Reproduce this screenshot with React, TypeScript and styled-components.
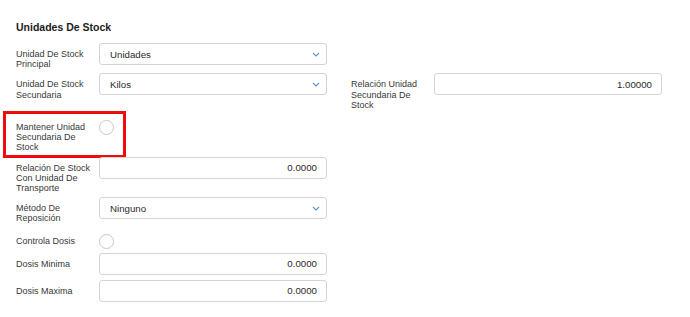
import React from "react";
import styled, { createGlobalStyle } from "styled-components";

const GlobalStyle = createGlobalStyle`
  body {
    margin: 0;
    background: #ffffff;
    font-family: "Liberation Sans", Arial, sans-serif;
  }
`;

type Field = {
  label: string;
  kind: "select" | "input" | "check";
  value?: string;
  highlighted?: boolean;
  side?: { label: string; value: string };
};

const fields: Field[] = [
  { label: "Unidad De Stock Principal", kind: "select", value: "Unidades" },
  {
    label: "Unidad De Stock Secundaria",
    kind: "select",
    value: "Kilos",
    side: { label: "Relación Unidad Secundaria De Stock", value: "1.00000" },
  },
  { label: "Mantener Unidad Secundaria De Stock", kind: "check", highlighted: true },
  { label: "Relación De Stock Con Unidad De Transporte", kind: "input", value: "0.0000" },
  { label: "Método De Reposición", kind: "select", value: "Ninguno" },
  { label: "Controla Dosis", kind: "check" },
  { label: "Dosis Minima", kind: "input", value: "0.0000" },
  { label: "Dosis Maxima", kind: "input", value: "0.0000" },
];

const Chevron = () => (
  <svg width="8" height="5" viewBox="0 0 8 5">
    <path d="M1 1 L4 4 L7 1" fill="none" stroke="#5b95d3" strokeWidth="1.1" />
  </svg>
);

export default function App() {
  return (
    <Page>
      <GlobalStyle />
      <Title>Unidades De Stock</Title>
      <Form>
        {fields.map((f) => (
          <Row key={f.label} check={f.kind === "check"}>
            {f.highlighted && <Highlight />}
            <Label check={f.kind === "check"}>{f.label}</Label>
            {f.kind === "check" ? (
              <Radio />
            ) : (
              <Box select={f.kind === "select"}>
                <span>{f.value}</span>
                {f.kind === "select" && <Chevron />}
              </Box>
            )}
            {f.side && (
              <>
                <Label side>{f.side.label}</Label>
                <Box>
                  <span>{f.side.value}</span>
                </Box>
              </>
            )}
          </Row>
        ))}
      </Form>
    </Page>
  );
}

const Page = styled.div`
  padding: 21px 0 0 16px;
`;

const Title = styled.div`
  font-size: 10.5px;
  line-height: 13px;
  font-weight: bold;
  color: #1c1c1c;
  margin-bottom: 9px;
`;

const Form = styled.div`
  display: flex;
  flex-direction: column;
  gap: 4px;
`;

const Row = styled.div<{ check?: boolean }>`
  position: relative;
  display: grid;
  grid-template-columns: 83px 228px 24px 83px 228px;
  align-items: start;
  min-height: ${(p) => (p.check ? "0" : "23px")};
  padding-top: ${(p) => (p.check ? "6px" : "0")};
`;

const Label = styled.div<{ check?: boolean; side?: boolean }>`
  font-size: 9px;
  line-height: 10.2px;
  color: #383838;
  padding-right: 4px;
  padding-top: ${(p) => (p.check ? "2px" : "6px")};
  grid-column: ${(p) => (p.side ? "4" : "auto")};
`;

const Box = styled.div<{ select?: boolean }>`
  box-sizing: border-box;
  height: 22px;
  border: 1px solid #d4d4d4;
  border-radius: 3px;
  background: #ffffff;
  display: flex;
  align-items: center;
  justify-content: ${(p) => (p.select ? "space-between" : "flex-end")};
  padding: ${(p) => (p.select ? "0 6px 0 10px" : "0 9px 0 10px")};
  font-size: 9.7px;
  color: #2a2a2a;

  svg {
    margin-top: 1px;
  }
`;

const Radio = styled.div`
  box-sizing: border-box;
  width: 15px;
  height: 15px;
  border: 1px solid #c9c9c9;
  border-radius: 50%;
  background: #ffffff;
`;

const Highlight = styled.div`
  position: absolute;
  left: -13px;
  top: -3px;
  width: 123px;
  height: 47px;
  box-sizing: border-box;
  border: 3px solid #ee0c0c;
  pointer-events: none;
`;
